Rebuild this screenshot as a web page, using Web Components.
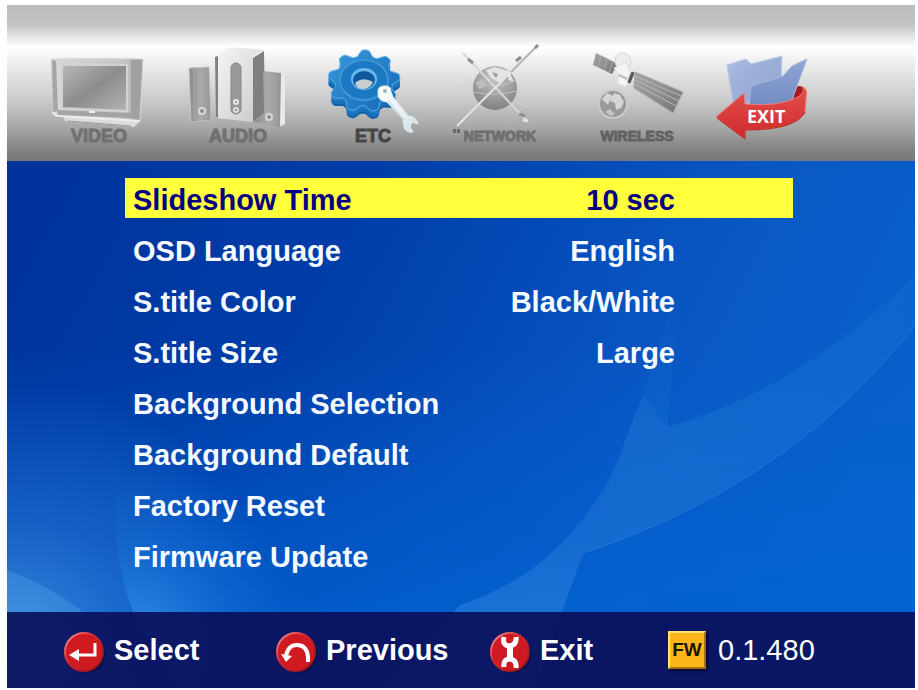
<!DOCTYPE html>
<html lang="en">
<head>
<meta charset="utf-8">
<title>Setup</title>
<style>
body{
    margin: 0;
    background: #fefefe;
    font-family: "Liberation Sans", Arial, sans-serif;
}
</style>
</head>
<body>
<osd-screen>
    <osd-tabs slot="tabs">
        <osd-tab icon="video" tone="#707070">VIDEO</osd-tab>
        <osd-tab icon="audio" tone="#707070">AUDIO</osd-tab>
        <osd-tab icon="etc" tone="#454545" current>ETC</osd-tab>
        <osd-tab icon="network" tone="#6e6e6e" small>NETWORK</osd-tab>
        <osd-tab icon="wireless" tone="#626262" small>WIRELESS</osd-tab>
        <osd-tab icon="exit"></osd-tab>
    </osd-tabs>
    <osd-row value="10 sec" selected>Slideshow Time</osd-row>
    <osd-row value="English">OSD Language</osd-row>
    <osd-row value="Black/White">S.title Color</osd-row>
    <osd-row value="Large">S.title Size</osd-row>
    <osd-row>Background Selection</osd-row>
    <osd-row>Background Default</osd-row>
    <osd-row>Factory Reset</osd-row>
    <osd-row>Firmware Update</osd-row>
    <osd-footer slot="footer">
        <osd-key icon="select">Select</osd-key>
        <osd-key icon="previous">Previous</osd-key>
        <osd-key icon="tools">Exit</osd-key>
        <osd-version>0.1.480</osd-version>
    </osd-footer>
</osd-screen>

<script>
// outline of a cog seen at an angle
function gearPath(cx, cy, rx, ry, teeth) {
    const pts = [];
    const steps = 144;
    for (let i = 0; i < steps; i++) {
        const a = i / steps * Math.PI * 2;
        const wave = Math.max(-1, Math.min(1, Math.sin(a * teeth + 2.8) * 1.3));
        const k = 0.9 + wave * 0.1;
        pts.push((cx + Math.cos(a) * rx * k).toFixed(1) + ' ' + (cy + Math.sin(a) * ry * k).toFixed(1));
    }
    return 'M' + pts.join('L') + 'Z';
}

const tabIcons = {
video: {box: '39 39 120 87', art: `
<defs>
<linearGradient id="a" x2="1" y2="1"><stop stop-color="#b9b9b9"/><stop offset=".5" stop-color="#8c8c8c"/><stop offset="1" stop-color="#b4b4b4"/></linearGradient>
<linearGradient id="b" x2="1"><stop stop-color="#d8d8d8"/><stop offset=".8" stop-color="#c6c6c6"/><stop offset="1" stop-color="#a0a0a0"/></linearGradient>
</defs>
<path d="M64 117L140 121L134 127L65 121Z" fill="#ddd"/>
<path d="M68 121L131 126" stroke="#999" stroke-width="1"/>
<path d="M51 59Q98 58 143 59L140 121L53 114Z" fill="url(#b)" stroke="#d6d6d6"/>
<path d="M52 60L56 61L58 111L53 112Z" fill="#a6a6a6"/>
<path d="M131 60L142 60L139 119L131 118Z" fill="#a0a0a0"/>
<path d="M53 112Q54 116 60 116L140 121" fill="none" stroke="#eee" stroke-width="2"/>
<path d="M57 110L131 113V118L58 115Z" fill="#a4a4a4"/>
<path d="M62 65H127V111L62 108Z" fill="url(#a)" stroke="#d2d2d2" stroke-width="2"/>
<path d="M89 112h6" stroke="#eee" stroke-width="2"/>`},
audio: {box: '178 39 120 87', art: `
<defs>
<linearGradient id="a" x2="1"><stop stop-color="#888"/><stop offset=".5" stop-color="#aaa"/><stop offset="1" stop-color="#949494"/></linearGradient>
<linearGradient id="b" x2="1" y2="1"><stop stop-color="#f6f6f6"/><stop offset="1" stop-color="#c9c9c9"/></linearGradient>
</defs>
<path d="M189 68L209 67L211 120L191 122Z" fill="url(#a)" stroke="#c2c2c2"/>
<path d="M194 69V120M198 69V120M202 69V119M206 69V119" stroke="#a9a9a9" stroke-width="1"/>
<circle cx="202" cy="111" r="4" fill="#d8d8d8"/><circle cx="202" cy="111" r="2" fill="#8d8d8d"/>
<path d="M216 57L229 47L264 50L253 56V122L216 118Z" fill="url(#b)"/>
<path d="M215 57L218 56V118L216 117Z" fill="#808080"/>
<path d="M253 58L264 51L265 112L253 122Z" fill="#7f7f7f"/>
<rect x="231" y="63" width="10" height="51" rx="5" fill="#989898" stroke="#858585"/>
<circle cx="236" cy="102" r="3" fill="#e8e8e8"/><circle cx="236" cy="110" r="3" fill="#ddd"/>
<circle cx="236" cy="102" r="1" fill="#888"/><circle cx="236" cy="110" r="1" fill="#888"/>
<path d="M281 72L285 73V124L279 127Z" fill="#e9e9e9"/>
<path d="M263 71L281 73L280 127L254 122L264 113Z" fill="url(#a)"/>
<path d="M268 73V123M272 74V124M276 75V124" stroke="#a8a8a8" stroke-width="1"/>
<circle cx="269" cy="117" r="4" fill="#d8d8d8"/><circle cx="269" cy="117" r="2" fill="#8d8d8d"/>`},
etc: {box: '313 39 120 87', art: `
<defs>
<linearGradient id="a" x2="1" y2="1"><stop stop-color="#3a97da"/><stop offset="1" stop-color="#1668b4"/></linearGradient>
<linearGradient id="b" x2="1" y2="1"><stop stop-color="#fff"/><stop offset=".6" stop-color="#e7f1f5"/><stop offset="1" stop-color="#c9dbe2"/></linearGradient>
</defs>
<path d="${gearPath(364, 89, 36, 31, 9)}" fill="#1260a8"/>
<path d="${gearPath(364, 87, 36, 31, 9)}" fill="#1a70ba"/>
<path d="${gearPath(364, 84, 36, 31, 9)}" fill="#1f7ac6"/>
<path d="${gearPath(364, 81, 36, 31, 9)}" fill="url(#a)" stroke="#55b4ea" stroke-width="1"/>
<ellipse cx="364" cy="80" rx="24" ry="20" fill="#1d78c3" stroke="#3b95d6" stroke-width="2"/>
<ellipse cx="364" cy="79" rx="13" ry="11" fill="#67bbee"/>
<ellipse cx="364" cy="80" rx="11" ry="9" fill="#0f5a9e"/>
<path d="M355 83Q363 76 373 82Q370 89 363 89Q357 89 355 83Z" fill="#c8cdd0"/>
<path d="M378 92Q378 86 384 86Q391 85 391 92L393 97L408 116Q416 116 418 124L412 122L410 127L413 132Q405 133 404 126L403 119L387 102Q377 101 378 92Z" fill="url(#b)" stroke="#e4eff3"/>
<path d="M388 100L404 120" stroke="#bccfd7" stroke-width="1"/>
<circle cx="385" cy="91" r="2" fill="#9cb6c3"/>`},
network: {box: '440 39 120 87', art: `
<defs>
<radialGradient id="a" cx=".5" cy=".25" r=".8"><stop stop-color="#c8c8c8"/><stop offset="1" stop-color="#7c7c7c"/></radialGradient>
</defs>
<path d="M454 87Q495 79 527 91M457 75L530 108" fill="none" stroke="#d5d5d5" stroke-width="1"/>
<circle cx="495" cy="88" r="22" fill="url(#a)"/>
<path d="M486 70L495 67L509 71L514 82L505 79L500 83L491 78Z" fill="#e3e3e3"/>
<path d="M476 82L483 79L486 86L479 89Z" fill="#bdbdbd"/>
<path d="M492 72l6 2l-2 4ZM505 76l4 2l-3 3Z" fill="#999"/>
<path d="M474 92Q495 97 516 91M475 83Q495 90 515 81" fill="none" stroke="#c0c0c0" stroke-width="1"/>
<path d="M463 53L526 120" stroke="#d6d6d6" stroke-width="2"/>
<path d="M537 46L510 73" stroke="#b4b4b4" stroke-width="2"/>
<path d="M511 72L457 126" stroke="#e4e4e4" stroke-width="2"/>
<path d="M468 59l5 4M516 61l5 -4M535 48l3 -3M519 114l6 2" stroke="#8f8f8f" stroke-width="3"/>
<path d="M523 120l5 1" stroke="#e1e1e1" stroke-width="3"/>
<path d="M453 131h3M457 131h3" stroke="#696969" stroke-width="4"/>`},
wireless: {box: '577 39 120 87', art: `
<defs>
<linearGradient id="a" x2="1" y2="1"><stop stop-color="#a4a4a4"/><stop offset=".5" stop-color="#909090"/><stop offset="1" stop-color="#707070"/></linearGradient>
</defs>
<path d="M596 53L618 64L612 74L593 65Z" fill="url(#a)"/>
<path d="M601 56L598 67M607 59L604 70M613 62L609 72" stroke="#aaa" stroke-width="1"/>
<circle cx="623" cy="61" r="8" fill="#ececec" stroke="#d6d6d6"/>
<path d="M614 68L626 62L630 72L626 87L617 83L619 75Z" fill="#f5f5f5" stroke="#dcdcdc"/>
<path d="M619 75L627 79" stroke="#bbb" stroke-width="2"/>
<path d="M632 72L634 73L630 83L628 82Z" fill="#555" stroke="#555"/>
<path d="M635 72L683 92L673 113L634 88Z" fill="url(#a)" stroke="#a7a7a7"/>
<path d="M635 76L681 96M635 80L679 101M635 84L676 106" stroke="#b9b9b9" stroke-width="1"/>
<circle cx="613" cy="104" r="14" fill="#999" stroke="#ccc" stroke-width="2"/>
<path d="M602 99l5 -6l6 3l-3 4l-2 5ZM614 93l6 2l4 7l-3 6l-5 2l-1 -7l-5 -2Z" fill="#d6d6d6"/>
<path d="M605 112l5 -3l5 5l-4 2Z" fill="#c4c4c4"/>`},
exit: {box: '700 39 120 87', art: `
<defs>
<linearGradient id="a" x2="1" y2="1"><stop stop-color="#a9bce0"/><stop offset="1" stop-color="#8ca1d0"/></linearGradient>
<linearGradient id="b" y2="1" x2="0"><stop stop-color="#8ea5d4"/><stop offset="1" stop-color="#748bc2"/></linearGradient>
<linearGradient id="c" y2="1" x2="0"><stop stop-color="#e2504c"/><stop offset="1" stop-color="#d02a2c"/></linearGradient>
</defs>
<path d="M790 103Q792 87 799 86Q805 86 806 93L804 112Z" fill="#a91c20"/>
<path d="M727 65L746 59L751 64L782 56L781 80L752 103H733Z" fill="url(#a)" stroke="#b8c8e6"/>
<path d="M749 107L751 86L783 76L792 66L807 59L790 105Z" fill="url(#b)" stroke="#a9bbdf"/>
<path d="M716 117L744 93L745 104Q780 107 798 97Q805 93 803 87Q808 89 806 98L805 112Q796 130 745 130V139Z" fill="url(#c)" stroke="#e9807a"/>
<path d="M717 118L745 139V130Q796 130 805 112" fill="none" stroke="#b32023"/>
<text x="747" y="123" font-family="Open Sans, Liberation Sans, sans-serif" font-weight="700" font-size="18" fill="#fff">EXIT</text>`}
};

const keyIcons = {
select: '<path d="M31 12V24H12" fill="none" stroke="#fff" stroke-width="3"/><path d="M5 24L15 18V30Z" fill="#fff"/>',
previous: '<path d="M32 31V26Q31 14 21 14Q12 14 10 25" fill="none" stroke="#fff" stroke-width="4"/><path d="M5 23L16 25L10 31Z" fill="#fff"/>',
tools: '<g fill="none" stroke="#fff"><path d="M14 6Q12 14 19 15Q27 14 26 6M14 36Q13 28 20 28Q27 29 26 37" stroke-width="5"/><path d="M20 14V29" stroke-width="6"/></g>'
};

class OsdScreen extends HTMLElement {
    constructor() {
        super();
        this.attachShadow({mode: 'open'}).innerHTML = `
<style>
:host{
    display: flex;
    flex-direction: column;
    box-sizing: border-box;
    min-height: 100vh;
    padding: 5px 3px 2px 7px;
}
#stage{
    display: grid;
    grid-template-rows: 1fr auto;
    flex: 1;
}
#wall{
    grid-area: 1 / 1 / 3 / 2;
    width: 100%;
    height: 100%;
    min-height: 0;
    contain: size;
}
main{
    grid-area: 1 / 1;
    display: flex;
    flex-direction: column;
    gap: 11px;
    padding: 17px 122px 36px 118px;
    z-index: 1;
}
slot[name=footer]{
    display: block;
    grid-area: 2 / 1;
    z-index: 1;
}
</style>
<slot name="tabs"></slot>
<div id="stage">
<svg id="wall" viewBox="7 161 908 527" preserveAspectRatio="none" aria-hidden="true">
<defs>
<linearGradient id="base" x1="0" y1=".1" x2="1" y2=".4"><stop stop-color="#00339b"/><stop offset=".35" stop-color="#003da8"/><stop offset=".6" stop-color="#054ebb"/><stop offset=".8" stop-color="#0a5ac6"/><stop offset="1" stop-color="#085fca"/></linearGradient>
<linearGradient id="low" x2="0" y2="1"><stop offset=".35" stop-color="#0064d2" stop-opacity="0"/><stop offset=".85" stop-color="#0064d2" stop-opacity=".65"/></linearGradient>
<radialGradient id="glow" gradientUnits="userSpaceOnUse" cx="10" cy="650" r="270"><stop stop-color="#64b4f0" stop-opacity=".6"/><stop offset=".5" stop-color="#3c82dc" stop-opacity=".35"/><stop offset="1" stop-color="#3c82dc" stop-opacity="0"/></radialGradient>
<radialGradient id="arc" gradientUnits="userSpaceOnUse" cx="135" cy="645" r="180"><stop stop-color="#3ca5f5" stop-opacity=".7"/><stop offset=".5" stop-color="#1e82e6" stop-opacity=".25"/><stop offset="1" stop-color="#1478e1" stop-opacity="0"/></radialGradient>
<linearGradient id="leaf" x1="1" y1="0" x2="0" y2="1"><stop stop-color="#288cdc" stop-opacity=".14"/><stop offset="1" stop-color="#3c8cdc" stop-opacity=".3"/></linearGradient>
<linearGradient id="beam" x2="0" y2="1"><stop stop-color="#5aa0eb" stop-opacity=".06"/><stop offset="1" stop-color="#5aa5f0" stop-opacity=".34"/></linearGradient>
<linearGradient id="fade" x2="0" y2="1"><stop stop-color="#288cdc" stop-opacity="0"/><stop offset="1" stop-color="#288cdc" stop-opacity=".14"/></linearGradient>
</defs>
<path d="M7 161H915V688H7Z" fill="url(#base)"/>
<path d="M7 161H915V688H7Z" fill="url(#low)"/>
<path d="M7 161H915V688H7Z" fill="url(#glow)"/>
<path d="M7 570Q60 590 92 620L140 688H7Z" fill="#6cc0f5" fill-opacity=".22"/>
<path d="M128 410Q105 500 123 580Q131 615 150 640L180 688H420L330 610Q250 500 128 410Z" fill="url(#arc)"/>
<path d="M643 395L680 280L668 427Z" fill="url(#fade)"/>
<path d="M915 325Q790 485 583 553L643 395L668 427Q800 390 915 275Z" fill="url(#leaf)"/>
<path d="M915 325Q790 485 583 553" fill="none" stroke="#4c9ce4" stroke-opacity=".35"/>
<path d="M643 395Q615 490 560 545Q520 585 460 605L380 688H535L583 553Z" fill="url(#beam)"/>
</svg>
<main><slot></slot></main>
<slot name="footer"></slot>
</div>`;
    }
}
window.customElements.define('osd-screen', OsdScreen);


class OsdTabs extends HTMLElement {
    constructor() {
        super();
        this.attachShadow({mode: 'open'}).innerHTML = `
<style>
:host{
    display: block;
    background: linear-gradient(#bdbdbd, #c2c2c2 12%, #fff 27%, #f0f0f0 36%, #c8c8c8 62%, #a4a4a4 80%, #828282 93%, #777);
}
nav{
    display: grid;
    grid-template-columns: 138fr 140fr 130fr 124fr 150fr 96fr 107fr;
    align-items: start;
    padding: 34px 0 15px 23px;
}
</style>
<nav aria-label="Setup pages"><slot></slot></nav>`;
    }
}
window.customElements.define('osd-tabs', OsdTabs);


class OsdTab extends HTMLElement {
    constructor() {
        super();
        this.attachShadow({mode: 'open'});
    }
    connectedCallback() {
        const icon = tabIcons[this.getAttribute('icon')];
        this.shadowRoot.innerHTML = `
<style>
:host{
    display: flex;
    justify-content: center;
    min-width: 0;
}
button{
    display: flex;
    flex-direction: column;
    align-items: center;
    border: 0;
    padding: 0;
    background: none;
    font: bold 18px/20px "Liberation Sans", Arial, sans-serif;
    color: ${this.getAttribute('tone') || '#fff'};
    -webkit-text-stroke: 1px;
    cursor: pointer;
}
:host([small]) button{
    font-size: 14px;
}
svg{
    display: block;
    width: 120px;
    height: 87px;
    margin: 0 -12px;
    overflow: visible;
    -webkit-text-stroke: 0;
}
span{
    min-height: 20px;
}
</style>
<button type="button"><svg viewBox="${icon.box}">${icon.art}</svg><span><slot></slot></span></button>`;
        if (this.hasAttribute('current')) {
            this.shadowRoot.querySelector('button').setAttribute('aria-current', 'page');
        }
    }
}
window.customElements.define('osd-tab', OsdTab);


class OsdRow extends HTMLElement {
    constructor() {
        super();
        this.attachShadow({mode: 'open'});
    }
    connectedCallback() {
        this.shadowRoot.innerHTML = `
<style>
:host{
    display: block;
}
button{
    display: flex;
    justify-content: space-between;
    box-sizing: border-box;
    width: 100%;
    height: 40px;
    border: 0;
    padding: 4px 118px 0 8px;
    background: none;
    color: #f4faff;
    font: bold 29px/36px "Liberation Sans", Arial, sans-serif;
    white-space: nowrap;
    cursor: pointer;
}
:host([selected]) button{
    background: #ffff3c;
    color: #0a0082;
}
</style>
<button type="button"><span><slot></slot></span><span id="value"></span></button>`;
        this.shadowRoot.getElementById('value').textContent = this.getAttribute('value') || '';
    }
}
window.customElements.define('osd-row', OsdRow);


class OsdFooter extends HTMLElement {
    constructor() {
        super();
        this.attachShadow({mode: 'open'}).innerHTML = `
<style>
:host{
    display: grid;
    grid-template-columns: 212fr 214fr 178fr 247fr;
    align-items: center;
    height: 76px;
    padding-left: 57px;
    background: rgba(11, 16, 91, .92);
}
</style>
<slot></slot>`;
    }
}
window.customElements.define('osd-footer', OsdFooter);


class OsdKey extends HTMLElement {
    constructor() {
        super();
        this.attachShadow({mode: 'open'});
    }
    connectedCallback() {
        this.shadowRoot.innerHTML = `
<style>
:host{
    display: block;
}
button{
    display: flex;
    align-items: center;
    gap: 10px;
    border: 0;
    padding: 0;
    background: none;
    color: #fff;
    font: bold 29px/36px "Liberation Sans", Arial, sans-serif;
    cursor: pointer;
}
svg{
    width: 40px;
    height: 44px;
    overflow: visible;
}
</style>
<button type="button">
<svg viewBox="0 -3 40 44" aria-hidden="true">
<defs><linearGradient id="r" x2="1" y2="1"><stop stop-color="#f0a0a0"/><stop offset=".4" stop-color="#d22a30"/><stop offset="1" stop-color="#8a1018"/></linearGradient></defs>
<circle cx="22" cy="23" r="19" fill="#06093a" fill-opacity=".7"/>
<circle cx="20" cy="21" r="19" fill="#cf1a22" stroke="url(#r)" stroke-width="2"/>
${keyIcons[this.getAttribute('icon')]}
</svg><slot></slot></button>`;
    }
}
window.customElements.define('osd-key', OsdKey);


class OsdVersion extends HTMLElement {
    constructor() {
        super();
        this.attachShadow({mode: 'open'}).innerHTML = `
<style>
:host{
    display: flex;
    align-items: center;
    gap: 12px;
    color: #fff;
    font-size: 29px;
    line-height: 36px;
}
#fw{
    box-sizing: border-box;
    width: 38px;
    height: 38px;
    border: 2px solid;
    border-color: #ffe27a #a87010 #a87010 #ffe27a;
    background: #fdb51c;
    box-shadow: 2px 2px 2px #05082e;
    color: #1a1408;
    text-align: center;
    font: bold 19px/34px "Liberation Sans Narrow", "Liberation Sans", sans-serif;
}
</style>
<span id="fw">FW</span><slot></slot>`;
    }
}
window.customElements.define('osd-version', OsdVersion);
</script>
</body>
</html>
